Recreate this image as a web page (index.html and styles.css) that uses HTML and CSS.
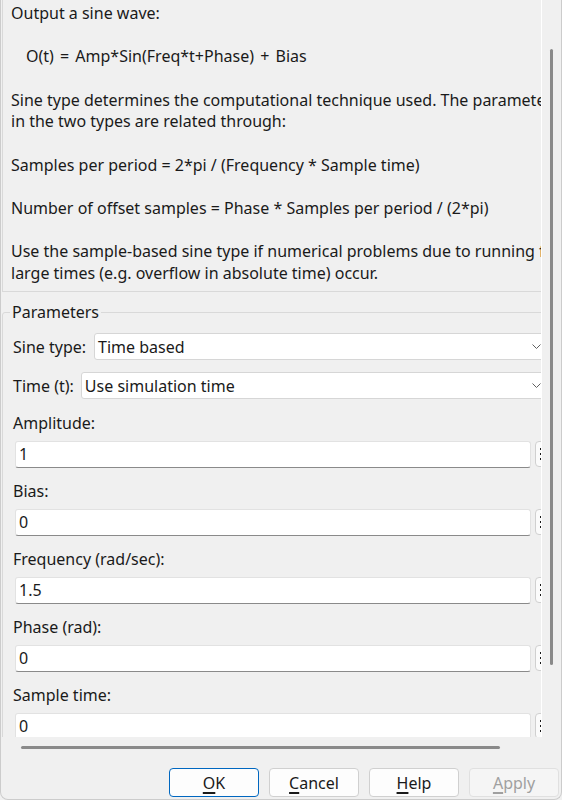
FILE: index.html
```html
<!DOCTYPE html>
<html>
<head>
<meta charset="utf-8">
<link rel="stylesheet" href="styles.css">
</head>
<body>
<div class="window">
  <div class="scrollarea">
    <div class="viewport">
      <div class="content">
        <div class="desc">
          <p>Output a sine wave:</p>
          <p class="formula">O(t) = Amp*Sin(Freq*t+Phase) + Bias</p>
          <p>Sine type determines the computational technique used. The parameters<br>in the two types are related through:</p>
          <p>Samples per period = 2*pi / (Frequency * Sample time)</p>
          <p>Number of offset samples = Phase * Samples per period / (2*pi)</p>
          <p>Use the sample-based sine type if numerical problems due to running for<br>large times (e.g. overflow in absolute time) occur.</p>
        </div>
        <fieldset class="params">
          <legend>Parameters</legend>
          <div class="row">
            <span class="lbl">Sine type:</span>
            <div class="select"><span>Time based</span><svg class="chev" width="9" height="5" viewBox="0 0 9 5"><polyline points="0.5,0.5 4.5,4.5 8.5,0.5" fill="none" stroke="#606060" stroke-width="1"/></svg></div>
          </div>
          <div class="row row-time">
            <span class="lbl">Time (t):</span>
            <div class="select"><span>Use simulation time</span><svg class="chev" width="9" height="5" viewBox="0 0 9 5"><polyline points="0.5,0.5 4.5,4.5 8.5,0.5" fill="none" stroke="#606060" stroke-width="1"/></svg></div>
          </div>
          <div class="param">
            <div class="plabel">Amplitude:</div>
            <div class="frow"><div class="field">1</div><div class="more"><i></i><i></i><i></i></div></div>
          </div>
          <div class="param">
            <div class="plabel">Bias:</div>
            <div class="frow"><div class="field">0</div><div class="more"><i></i><i></i><i></i></div></div>
          </div>
          <div class="param">
            <div class="plabel">Frequency (rad/sec):</div>
            <div class="frow"><div class="field">1.5</div><div class="more"><i></i><i></i><i></i></div></div>
          </div>
          <div class="param">
            <div class="plabel">Phase (rad):</div>
            <div class="frow"><div class="field">0</div><div class="more"><i></i><i></i><i></i></div></div>
          </div>
          <div class="param">
            <div class="plabel">Sample time:</div>
            <div class="frow"><div class="field">0</div><div class="more"><i></i><i></i><i></i></div></div>
          </div>
        </fieldset>
      </div>
    </div>
    <div class="vscroll"><div class="vthumb"></div></div>
  </div>
  <div class="hscroll"><div class="hthumb"></div></div>
  <div class="buttons">
    <div class="btn btn-default"><u>O</u>K</div>
    <div class="btn"><u>C</u>ancel</div>
    <div class="btn"><u>H</u>elp</div>
    <div class="btn btn-disabled"><u>A</u>pply</div>
  </div>
</div>
</body>
</html>
```
FILE: styles.css
```css
html, body {
  margin: 0;
  padding: 0;
}
body {
  width: 562px;
  height: 800px;
  background: #f0f0f0;
  font-family: "Noto Sans", "Open Sans", sans-serif;
  font-size: 16px;
  color: #1a1a1a;
  overflow: hidden;
}
.window {
  box-sizing: border-box;
  width: 562px;
  height: 800px;
  border: 1px solid #cccccc;
  border-top: none;
  border-radius: 0 0 8px 8px;
  background: #f0f0f0;
  display: flex;
  flex-direction: column;
}
.scrollarea {
  display: flex;
  height: 737px;
  flex: none;
}
.viewport {
  width: 540px;
  border-right: 1px solid #ffffff;
  overflow: hidden;
  flex: none;
}
.content {
  width: 561px;
}
.desc {
  margin-left: 1px;
  border-left: 1px solid #d9d9d9;
  border-bottom: 1px solid #d9d9d9;
  padding: 3px 0 6px 8px;
  line-height: 21.67px;
  white-space: nowrap;
}
.desc p {
  margin: 0 0 21.67px 0;
}
.desc p:last-child {
  margin-bottom: 0;
}
.desc .formula {
  padding-left: 15px;
  word-spacing: 2px;
}
.params {
  margin: 10px 0 0 1px;
  border: 1px solid #d9d9d9;
  border-radius: 3px;
  padding: 10px 12px 0 10px;
  min-width: 0;
}
.params legend {
  padding: 0 2px;
  margin-left: -3px;
  line-height: 21.67px;
}
.row {
  display: flex;
  align-items: center;
  gap: 8px;
  height: 27px;
}
.row-time {
  margin-top: 12px;
  gap: 7px;
}
.lbl {
  white-space: nowrap;
}
.select {
  flex: 1;
  box-sizing: border-box;
  height: 27px;
  background: #ffffff;
  border: 1px solid #d6d6d6;
  border-radius: 3px;
  display: flex;
  align-items: center;
  justify-content: space-between;
  padding: 0 7px 0 3px;
}
.chev {
  display: block;
}
.param {
  margin-top: 13px;
}
.param + .param {
  margin-top: 12px;
}
.plabel {
  line-height: 22px;
  height: 22px;
}
.frow {
  display: flex;
  gap: 4px;
  margin: 7px 0 0 2px;
}
.field {
  box-sizing: border-box;
  width: 516px;
  height: 27px;
  flex: none;
  background: #ffffff;
  border: 1px solid #e2e2e2;
  border-bottom-color: #8a8a8a;
  border-radius: 3px;
  padding: 0 3px;
  line-height: 25px;
}
.more {
  box-sizing: border-box;
  width: 20px;
  height: 26px;
  flex: none;
  background: #fbfbfb;
  border: 1px solid #d0d0d0;
  border-radius: 4px;
  display: flex;
  flex-direction: column;
  align-items: flex-start;
  justify-content: center;
  gap: 3px;
  padding-left: 4px;
}
.more i {
  display: block;
  width: 2px;
  height: 2px;
  background: #1a1a1a;
}
.vscroll {
  flex: 1;
}
.vthumb {
  margin: 49px 0 0 8px;
  width: 3px;
  height: 616px;
  background: #8a8a8a;
  border-radius: 2px;
}
.hscroll {
  height: 31px;
  flex: none;
}
.hthumb {
  margin: 9px 0 0 20px;
  width: 479px;
  height: 3px;
  background: #8a8a8a;
  border-radius: 2px;
}
.buttons {
  display: flex;
  justify-content: flex-end;
  gap: 10px;
  padding-right: 2px;
}
.btn {
  box-sizing: border-box;
  width: 90px;
  height: 29px;
  background: #fdfdfd;
  border: 1px solid #d0d0d0;
  border-radius: 4px;
  display: flex;
  align-items: center;
  justify-content: center;
  color: #1a1a1a;
}
.btn u {
  text-decoration-thickness: 2px;
  text-underline-offset: 3px;
}
.btn-default {
  border-color: #0067c0;
}
.btn-disabled {
  color: #a0a0a0;
  background: #f5f5f5;
  border-color: #e0e0e0;
}
```
